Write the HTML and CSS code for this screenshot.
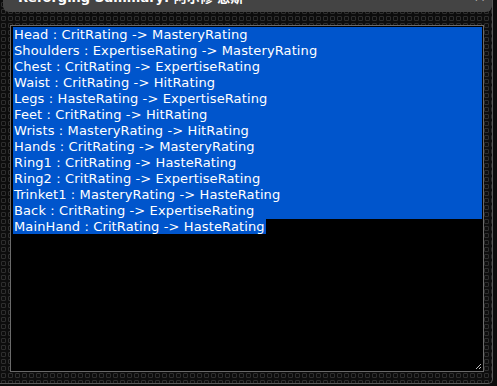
FILE: index.html
```html
<!DOCTYPE html>
<html>
<head>
<meta charset="utf-8">
<link rel="stylesheet" href="styles.css">
</head>
<body>
<div class="window">
  <div class="titlebar">
    <span class="title">Reforging Summary: 阿尔修 恩斯</span>
    <span class="close">×</span>
  </div>
  <div class="box">
    <div class="line sel">Head : CritRating -&gt; MasteryRating</div>
    <div class="line sel">Shoulders : ExpertiseRating -&gt; MasteryRating</div>
    <div class="line sel">Chest : CritRating -&gt; ExpertiseRating</div>
    <div class="line sel">Waist : CritRating -&gt; HitRating</div>
    <div class="line sel">Legs : HasteRating -&gt; ExpertiseRating</div>
    <div class="line sel">Feet : CritRating -&gt; HitRating</div>
    <div class="line sel">Wrists : MasteryRating -&gt; HitRating</div>
    <div class="line sel">Hands : CritRating -&gt; MasteryRating</div>
    <div class="line sel">Ring1 : CritRating -&gt; HasteRating</div>
    <div class="line sel">Ring2 : CritRating -&gt; ExpertiseRating</div>
    <div class="line sel">Trinket1 : MasteryRating -&gt; HasteRating</div>
    <div class="line sel">Back : CritRating -&gt; ExpertiseRating</div>
    <div class="line"><span class="sel-inline">MainHand : CritRating -&gt; HasteRating</span></div>
    <svg class="grip" width="7" height="7" viewBox="0 0 7 7"><path d="M6 1 L1 6 M6 4 L4 6" stroke="#bbb" stroke-width="1"/></svg>
  </div>
</div>
</body>
</html>
```
FILE: styles.css
```css
html, body {
  margin: 0;
  padding: 0;
  background: #0c0c0c;
  overflow: hidden;
}
.window {
  width: 492px;
  height: 383px;
  border-right: 1px solid #5a5a5a;
  border-bottom: 1px solid #5a5a5a;
  border-bottom-right-radius: 5px;
  background-color: #0d0d0d;
  background-image: radial-gradient(circle, transparent 1.6px, #2e2e2e 1.8px, #2e2e2e 2.7px, transparent 3px);
  background-size: 7px 7px;
  background-position: 0 1px;
  display: flex;
  flex-direction: column;
  overflow: hidden;
}
.titlebar {
  margin-left: 3px;
  width: 489px;
  height: 12px;
  background: #444;
  border-radius: 0 0 6px 6px;
  position: relative;
  overflow: hidden;
  flex: none;
}
.title {
  position: absolute;
  left: 15px;
  top: -10px;
  font-family: "DejaVu Sans", "Noto Sans CJK SC", sans-serif;
  font-weight: bold;
  font-size: 13px;
  line-height: 16px;
  color: #fff;
  white-space: nowrap;
}
.close {
  position: absolute;
  left: 470px;
  top: -12px;
  font-family: "DejaVu Sans", sans-serif;
  font-weight: bold;
  font-size: 16px;
  line-height: 16px;
  color: #fff;
}
.box {
  margin: 13px 0 0 10px;
  width: 469px;
  height: 344px;
  border: 1px solid #6a6a6a;
  background: #000;
  padding: 1px 1px 0 2px;
  box-sizing: content-box;
  position: relative;
  font-family: "DejaVu Sans", sans-serif;
  font-size: 13px;
  letter-spacing: 0.12px;
  line-height: 16px;
  color: #fff;
}
.line {
  padding-left: 1px;
  white-space: nowrap;
}
.sel {
  background: #0055cc;
}
.sel-inline {
  background: #0055cc;
  margin-left: -1px;
  padding-left: 1px;
  padding-right: 1px;
}
.grip {
  position: absolute;
  right: 1px;
  bottom: 1px;
}
```
